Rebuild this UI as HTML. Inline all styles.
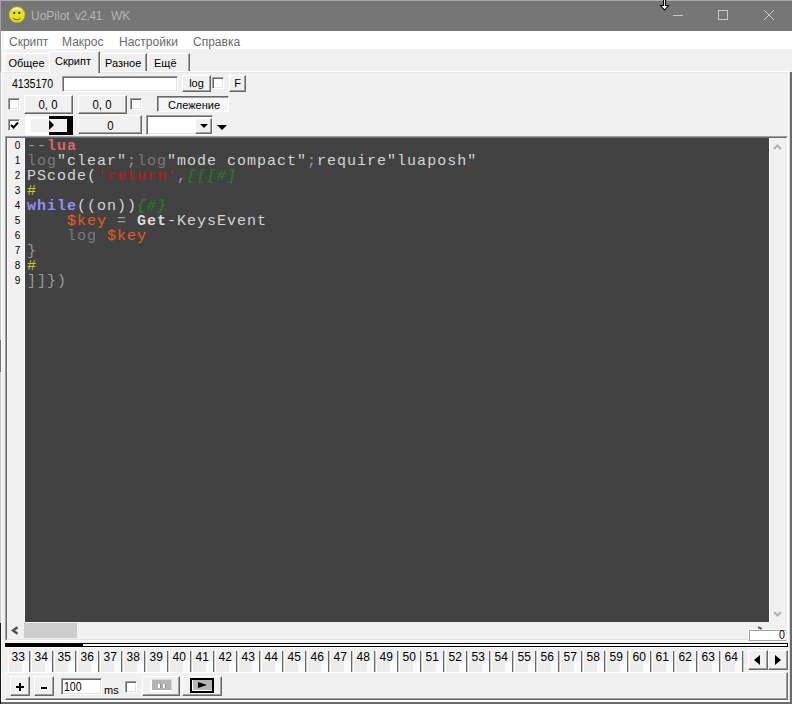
<!DOCTYPE html>
<html><head><meta charset="utf-8">
<style>
*{margin:0;padding:0;box-sizing:border-box}
html,body{width:792px;height:704px;overflow:hidden;background:#f0f0f0;font-family:"Liberation Sans",sans-serif;font-size:11px;color:#000}
.a{position:absolute}
.mi{top:35px;font-size:12px;color:#6a6a6a;line-height:15px}
.tab{border-top:1px solid #fff;border-left:1px solid #fff;border-right:1px solid #696969;box-shadow:inset -1px 0 0 #a0a0a0;background:#f0f0f0;font-size:11px}
.btn{border:1px solid;border-color:#fff #696969 #696969 #fff;box-shadow:inset -1px -1px 0 #a0a0a0;background:#f0f0f0;text-align:center;font-size:11px}
.chk{width:12px;height:12px;border:1px solid;border-color:#a0a0a0 #fff #fff #a0a0a0;box-shadow:inset 1px 1px 0 #696969,inset -1px -1px 0 #e3e3e3;background:#fff}
.edit{border:1px solid;border-color:#a0a0a0 #fff #fff #a0a0a0;box-shadow:inset 1px 1px 0 #696969,inset -1px -1px 0 #e3e3e3;background:#fff}
#code{font-family:"Liberation Mono",monospace;font-size:15px;line-height:15px;letter-spacing:1px;white-space:pre;color:#c8c8c8}
.ln{font-size:10px;line-height:15px;color:#000;text-align:center}
.t{top:651px;width:22px;height:21px;border-left:1px solid #fff;border-right:1px solid #696969;box-shadow:1px 0 0 #c8c8c8;background:linear-gradient(180deg,#f0f0f0 0,#f0f0f0 48%,rgba(0,0,0,0) 48%),linear-gradient(90deg,#ececec 0,#ececec 65%,#fafafa 65%);font-size:11px;padding-left:2.5px;line-height:13px;letter-spacing:0px}
.k1{color:#9a9a9a}.kr{color:#dc6464;font-weight:bold}.kg{color:#7a7a7a}.kw{color:#d4d4d4}
.ks{color:#a82020;font-weight:bold}.kc{color:#267426;font-style:italic;font-weight:bold}.ky{color:#c8c828}
.kb{color:#9090f8;font-weight:bold}.ko{color:#e85a20}.kB{color:#dcdcdc;font-weight:bold}
.dg{display:inline-block;font-size:12px;transform:scaleX(.88);transform-origin:left}
.dc{display:inline-block;font-size:12px;transform:scaleX(.95);transform-origin:center}
.dt{display:inline-block;font-size:12px;transform:scaleX(1);transform-origin:left}
</style></head><body>
<div class="a" style="left:0;top:0;width:792px;height:1px;background:#a8a8a8"></div>
<div class="a" style="left:0;top:1px;width:792px;height:30px;background:#767676"></div>
<div class="a" style="left:0;top:31px;width:792px;height:18px;background:#fff"></div>
<div class="a" style="left:1px;top:71px;width:789px;height:631px;border-top:1px solid #fff;border-left:1px solid #fff"></div>
<div class="a" style="left:2px;top:31px;width:2px;height:40px;background:#f6f6f6"></div>
<div class="a" style="left:790px;top:72px;width:2px;height:632px;background:#6a6a6a"></div>
<div class="a" style="left:1px;top:702px;width:791px;height:2px;background:#6a6a6a"></div>
<div class="a" style="left:788px;top:73px;width:1px;height:629px;background:#fbfbfb"></div><div class="a" style="left:789px;top:73px;width:1px;height:629px;background:#dcdcdc"></div>
<div class="a" style="left:2px;top:700px;width:788px;height:2px;background:#fff"></div>
<div class="a" style="left:0;top:0;width:1px;height:704px;background:linear-gradient(180deg,#a0a0a0 0,#a0a0a0 72px,#c4c4c4 72px,#c4c4c4 340px,#707070 340px,#707070 372px,#c8c8c8 372px,#c8c8c8 623px,#1a1a1a 623px)"></div>
<!-- smiley -->
<svg class="a" style="left:7px;top:5px" width="20" height="20" viewBox="0 0 20 20">
<circle cx="10" cy="9.6" r="7.9" fill="#e8e21c" stroke="#bdb020" stroke-width="0.7"/>
<path d="M5.5 5 Q10 1.8 14.5 5" stroke="#f4f0b0" stroke-width="2" fill="none"/>
<circle cx="7.3" cy="7.9" r="1.1" fill="#3a2a20"/><circle cx="12.3" cy="7.9" r="1.1" fill="#202040"/>
<path d="M6.2 13.2 Q9.8 16.5 13.6 13.2" stroke="#5a5020" stroke-width="1" fill="none"/>
</svg>
<div class="a" style="left:31px;top:9px;font-size:12px;color:#b4b4b4;line-height:14px">UoPilot</div>
<div class="a" style="left:75px;top:9px;font-size:12px;color:#b4b4b4;line-height:14px;letter-spacing:-0.5px">v2.41</div>
<div class="a" style="left:111px;top:9px;font-size:12px;color:#b4b4b4;line-height:14px">WK</div>
<!-- window controls -->
<div class="a" style="left:673px;top:15px;width:10px;height:1px;background:#cacaca"></div>
<div class="a" style="left:718px;top:10px;width:10px;height:10px;border:1px solid #cacaca"></div>
<svg class="a" style="left:763px;top:9px" width="12" height="12"><path d="M1 1L11 11M11 1L1 11" stroke="#cacaca" stroke-width="1"/></svg>
<!-- cursor -->
<svg class="a" style="left:659px;top:-1px" width="12" height="13" viewBox="0 0 12 13"><path d="M4.5 0V6.5H1.5L5.5 11L9.5 6.5H6.5V0Z" fill="#fff" stroke="#000" stroke-width="1.1"/></svg>
<div class="a mi" style="left:9px">Скрипт</div>
<div class="a mi" style="left:62px">Макрос</div>
<div class="a mi" style="left:119px">Настройки</div>
<div class="a mi" style="left:193px">Справка</div>
<!-- tabs -->
<div class="a tab" style="left:4px;top:53px;width:46px;height:18px;line-height:18px;padding-left:3.5px;border-right:none;box-shadow:none">Общее</div>
<div class="a tab" style="left:148px;top:53px;width:42px;height:18px;line-height:18px;padding-left:5px">Ещё</div>
<div class="a tab" style="left:100px;top:53px;width:47px;height:18px;line-height:18px;padding-left:4px">Разное</div>
<div class="a" style="left:2px;top:72px;width:48px;height:1px;background:#e6e6e6"></div>
<div class="a" style="left:100px;top:72px;width:688px;height:1px;background:#e6e6e6"></div>
<div class="a tab" style="left:49px;top:51px;width:51px;height:22px;line-height:19px;padding-left:5px">Скрипт</div>
<!-- row1 -->
<div class="a" style="left:12px;top:77px;line-height:14px"><span class="dg">4135170</span></div>
<div class="a edit" style="left:62px;top:76px;width:116px;height:16px"></div>
<div class="a btn" style="left:182px;top:75px;width:29px;height:17px;line-height:15px">log</div>
<div class="a chk" style="left:212px;top:77px"></div>
<div class="a btn" style="left:229px;top:75px;width:17px;height:17px;line-height:15px">F</div>
<!-- row2 -->
<div class="a chk" style="left:8px;top:98px"></div>
<div class="a btn" style="left:24px;top:95px;width:49px;height:19px;line-height:18px"><span class="dc">0, 0</span></div>
<div class="a btn" style="left:78px;top:95px;width:49px;height:19px;line-height:18px"><span class="dc">0, 0</span></div>
<div class="a chk" style="left:130px;top:98px"></div>
<div class="a" style="left:157px;top:96px;width:72px;height:16px;border:1px solid;border-color:#696969 #fff #fff #696969;box-shadow:inset 1px 1px 0 #a0a0a0;background:#f6f6f6;text-align:center;line-height:15px;padding-left:2px;padding-top:1px">Слежение</div>
<!-- row3 -->
<div class="a chk" style="left:8px;top:119px"></div>
<svg class="a" style="left:10px;top:121px" width="9" height="9"><path d="M1 4L3.5 6.5L8 1.5" stroke="#000" stroke-width="2" fill="none"/></svg>
<div class="a" style="left:25px;top:116px;width:48px;height:19px;background:#fff"></div>
<div class="a" style="left:49px;top:116px;width:24px;height:19px;background:#000"></div>
<div class="a" style="left:31px;top:119px;width:36px;height:13px;background:#f0f0f0"></div>
<div class="a" style="left:49px;top:120px;width:0;height:0;border-left:5px solid #000;border-top:5px solid transparent;border-bottom:5px solid transparent"></div>
<div class="a btn" style="left:78px;top:115px;width:64px;height:19px;line-height:20px"><span class="dc">0</span></div>
<div class="a edit" style="left:146px;top:115px;width:67px;height:20px"></div>
<div class="a btn" style="left:195px;top:118px;width:17px;height:16px"></div>
<div class="a" style="left:200px;top:124px;border-top:4px solid #000;border-left:4px solid transparent;border-right:4px solid transparent"></div>
<div class="a" style="left:217px;top:125px;border-top:5px solid #000;border-left:5px solid transparent;border-right:5px solid transparent"></div>
<!-- editor frame -->
<div class="a" style="left:5px;top:136px;width:783px;height:505px;border:1px solid;border-color:#a0a0a0 #fff #fff #a0a0a0"></div>
<div class="a" style="left:6px;top:137px;width:781px;height:503px;border:1px solid;border-color:#696969 #e3e3e3 #e3e3e3 #696969"></div>
<div class="a" style="left:7px;top:138px;width:18px;height:484px;background:#f0f0f0;border-right:1px solid #fafafa;border-left:1px solid #f8f8f8"></div>
<div class="a" style="left:25px;top:138px;width:744px;height:484px;background:#424242"></div>
<div class="a" style="left:769px;top:138px;width:18px;height:484px;background:#f0f0f0;border-left:1px solid #fff"></div>
<svg class="a" style="left:773px;top:144px" width="9" height="6"><path d="M1 5L4.5 1.5L8 5" stroke="#b0b0b0" stroke-width="2" fill="none"/></svg>
<svg class="a" style="left:773px;top:611px" width="9" height="6"><path d="M1 1L4.5 4.5L8 1" stroke="#b0b0b0" stroke-width="2" fill="none"/></svg>
<div class="a" style="left:7px;top:622px;width:780px;height:17px;background:#f0f0f0"></div>
<svg class="a" style="left:11px;top:626px" width="9" height="9"><path d="M6.5 1.3L2 4.5L6.5 7.7" stroke="#505050" stroke-width="2.4" fill="none"/></svg>
<div class="a" style="left:24px;top:623px;width:53px;height:15px;background:#cdcdcd"></div>
<div class="a" style="left:748px;top:629px;width:39px;height:12px;border:1px solid;border-color:#f8f8f8 #e0e0e0 #a8a8a8 #f8f8f8;box-shadow:inset 1px 1px 0 #a0a0a0;background:#fff"></div><div class="a" style="left:779px;top:629px;font-size:12.5px;line-height:12px;transform:scaleX(0.85);transform-origin:left">0</div>
<div class="a" style="left:758px;top:627px;width:4px;height:1.5px;background:#555;transform:rotate(25deg)"></div>
<div class="a ln" style="left:9px;top:138px;width:17px">0<br>1<br>2<br>3<br>4<br>5<br>6<br>7<br>8<br>9</div>
<div class="a" id="code" style="left:27px;top:139px"><span class="k1">--</span><span class="kr">lua</span>
<span class="kg">log</span><span class="kw">"clear"</span><span class="k1">;</span><span class="kg">log</span><span class="kw">"mode compact"</span><span class="k1">;</span><span class="kw">require"luaposh"</span>
<span class="kw">PScode(</span><span class="ks">'return'</span><span class="k1">,</span><span class="kc">[[[#]</span>
<span class="ky">#</span>
<span class="kb">while</span><span class="kw">((on))</span><span class="kc">{#}</span>
    <span class="ko">$key</span> <span class="k1">=</span> <span class="kB">Get</span><span class="kw">-KeysEvent</span>
    <span class="kg">log</span> <span class="ko">$key</span>
<span class="k1">}</span>
<span class="ky">#</span>
<span class="k1">]]})</span></div>
<!-- progress -->
<div class="a" style="left:5px;top:641px;width:783px;height:1px;background:#f8f8f8"></div><div class="a" style="left:5px;top:647px;width:783px;height:1px;background:#fbfbfb"></div>
<div class="a" style="left:5px;top:643px;width:783px;height:4px;border:1px solid #000;background:#fff"></div>
<div class="a" style="left:5px;top:643px;width:78px;height:4px;background:#000"></div>
<!-- tab strip -->
<div class="a t" style="left:8px"><span class="dt">33</span></div><div class="a t" style="left:31px"><span class="dt">34</span></div><div class="a t" style="left:54px"><span class="dt">35</span></div><div class="a t" style="left:77px"><span class="dt">36</span></div><div class="a t" style="left:100px"><span class="dt">37</span></div><div class="a t" style="left:123px"><span class="dt">38</span></div><div class="a t" style="left:146px"><span class="dt">39</span></div><div class="a t" style="left:169px"><span class="dt">40</span></div><div class="a t" style="left:192px"><span class="dt">41</span></div><div class="a t" style="left:215px"><span class="dt">42</span></div><div class="a t" style="left:238px"><span class="dt">43</span></div><div class="a t" style="left:261px"><span class="dt">44</span></div><div class="a t" style="left:284px"><span class="dt">45</span></div><div class="a t" style="left:307px"><span class="dt">46</span></div><div class="a t" style="left:330px"><span class="dt">47</span></div><div class="a t" style="left:353px"><span class="dt">48</span></div><div class="a t" style="left:376px"><span class="dt">49</span></div><div class="a t" style="left:399px"><span class="dt">50</span></div><div class="a t" style="left:422px"><span class="dt">51</span></div><div class="a t" style="left:445px"><span class="dt">52</span></div><div class="a t" style="left:468px"><span class="dt">53</span></div><div class="a t" style="left:491px"><span class="dt">54</span></div><div class="a t" style="left:514px"><span class="dt">55</span></div><div class="a t" style="left:537px"><span class="dt">56</span></div><div class="a t" style="left:560px"><span class="dt">57</span></div><div class="a t" style="left:583px"><span class="dt">58</span></div><div class="a t" style="left:606px"><span class="dt">59</span></div><div class="a t" style="left:629px"><span class="dt">60</span></div><div class="a t" style="left:652px"><span class="dt">61</span></div><div class="a t" style="left:675px"><span class="dt">62</span></div><div class="a t" style="left:698px"><span class="dt">63</span></div><div class="a t" style="left:721px"><span class="dt">64</span></div>
<div class="a btn" style="left:748px;top:650px;width:20px;height:20px"></div>
<div class="a btn" style="left:768px;top:650px;width:20px;height:20px"></div>
<div class="a" style="left:754px;top:655px;border-right:6px solid #000;border-top:5px solid transparent;border-bottom:5px solid transparent"></div>
<div class="a" style="left:775px;top:655px;border-left:6px solid #000;border-top:5px solid transparent;border-bottom:5px solid transparent"></div>
<!-- bottom panel -->
<div class="a" style="left:5px;top:672px;width:783px;height:28px;border:1px solid;border-color:#fff #696969 #696969 #fff;box-shadow:inset -1px -1px 0 #a0a0a0"></div>
<div class="a btn" style="left:10px;top:676px;width:20px;height:20px"></div><div class="a" style="left:16px;top:686px;width:8px;height:2px;background:#000"></div><div class="a" style="left:19px;top:683px;width:2px;height:8px;background:#000"></div>
<div class="a btn" style="left:34px;top:676px;width:20px;height:20px"></div><div class="a" style="left:41px;top:687px;width:6px;height:2px;background:#000"></div>
<div class="a edit" style="left:61px;top:678px;width:41px;height:17px;font-size:12px;line-height:17px;padding-left:2px"><span class="dg">100</span></div>
<div class="a" style="left:104px;top:684px;font-size:11px;line-height:12px">ms</div>
<div class="a chk" style="left:125px;top:681px"></div>
<div class="a btn" style="left:142px;top:676px;width:38px;height:20px"></div>
<div class="a" style="left:150px;top:679px;width:22px;height:13px;border:1px solid;border-color:#d8d8d8 #d8d8d8 #fff #fff;border-width:1px 1px 2px 2px;background:#b4b4b4"></div>
<div class="a" style="left:158px;top:684px;width:2px;height:4px;background:#fff;box-shadow:1px 0 0 #8a8a8a"></div>
<div class="a" style="left:163px;top:684px;width:2px;height:4px;background:#fff;box-shadow:1px 0 0 #8a8a8a"></div>
<div class="a btn" style="left:182px;top:676px;width:40px;height:20px"></div>
<div class="a" style="left:190px;top:678px;width:24px;height:15px;border:2px solid #000;box-shadow:inset 1px -1px 0 #fff;background:#b4b4b4"></div>
<div class="a" style="left:198px;top:682px;border-left:9px solid #000;border-top:3.5px solid transparent;border-bottom:3.5px solid transparent"></div>
</body></html>
